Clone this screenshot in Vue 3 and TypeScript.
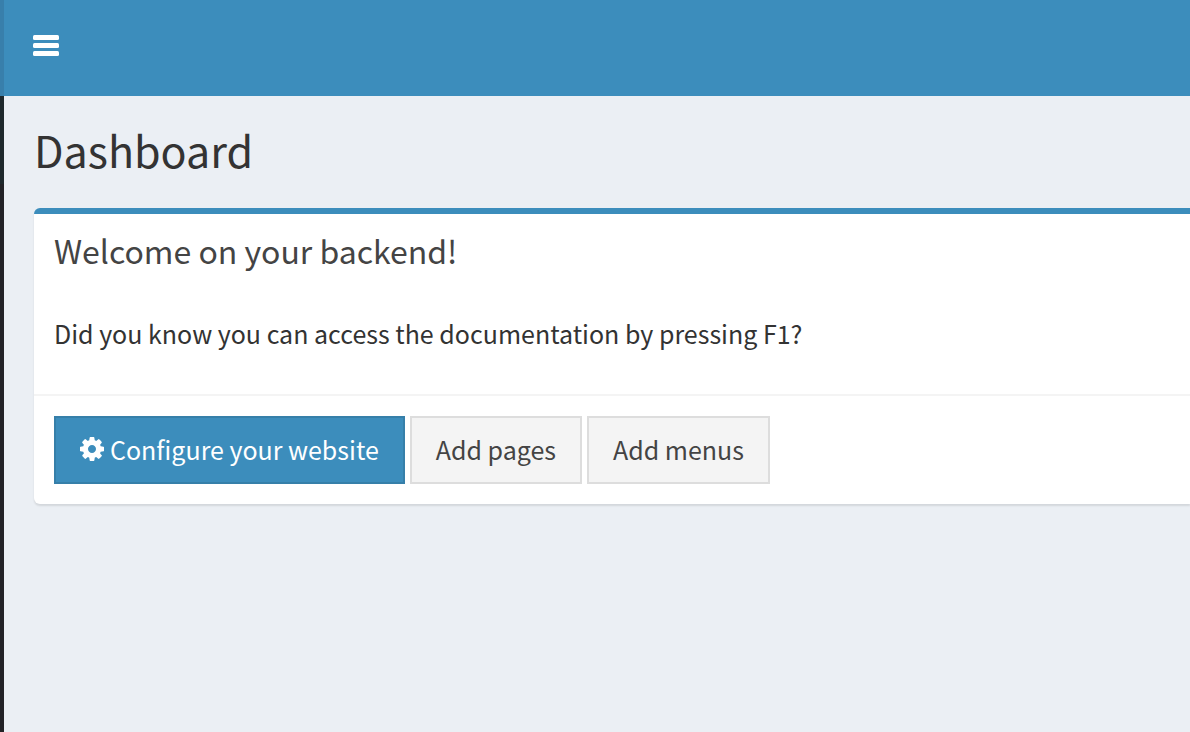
<script setup lang="ts">
import { ref } from 'vue'

interface Shortcut {
  label: string
}

const shortcuts: Shortcut[] = [{ label: 'Add pages' }, { label: 'Add menus' }]
const collapsed = ref<boolean>(true)
</script>

<template>
  <div class="layout">
    <aside class="sidebar">
      <div class="sidebar-brand"></div>
      <div class="sidebar-active"></div>
    </aside>
    <div class="page">
      <header class="navbar">
        <button
          class="toggle"
          type="button"
          aria-label="Toggle navigation"
          :aria-expanded="!collapsed"
          @click="collapsed = !collapsed"
        >
          <svg width="26" height="21" viewBox="0 0 26 21" aria-hidden="true">
            <rect width="26" height="5" rx="1.5" />
            <rect y="8" width="26" height="5" rx="1.5" />
            <rect y="16" width="26" height="5" rx="1.5" />
          </svg>
        </button>
      </header>
      <main class="content">
        <h1>Dashboard</h1>
        <section class="box">
          <div class="box-header">
            <h2>Welcome on your backend!</h2>
          </div>
          <div class="box-body">
            <p>Did you know you can access the documentation by pressing F1?</p>
          </div>
          <div class="box-footer">
            <button class="btn primary" type="button">
              <svg class="cog" width="24" height="24" viewBox="0 0 1536 1536" aria-hidden="true">
                <path
                  d="M1024 768q0-106-75-181t-181-75-181 75-75 181 75 181 181 75 181-75 75-181zm512-109v222q0 12-8 23t-20 13l-185 28q-19 54-39 91 35 50 107 138 10 12 10 25t-9 23q-27 37-99 108t-94 71q-12 0-26-9l-138-108q-44 23-91 38-16 136-29 186-7 28-36 28H657q-14 0-24.500-8.500T621 1506l-28-184q-49-16-90-37l-141 107q-10 9-25 9-14 0-25-11-126-114-165-168-7-10-7-23 0-12 8-23 15-21 51-66.500t54-70.500q-27-50-41-99L29 913q-13-2-21-12.500T0 877V655q0-12 8-23t19-13l186-28q14-46 39-92-40-57-107-138-10-12-10-24 0-10 9-23 26-36 98.500-107.500T337 135q13 0 26 10l138 107q44-23 91-38 16-136 29-186 7-28 36-28h222q14 0 24.500 8.500T915 30l28 184q49 16 90 37l142-107q9-9 24-9 13 0 25 10 129 119 165 170 7 8 7 22 0 12-8 23-15 21-51 66.500t-54 70.500q26 50 41 98l183 28q13 2 21 12.500t8 23.500z"
                />
              </svg>
              <span>Configure your website</span>
            </button>
            <button v-for="item in shortcuts" :key="item.label" class="btn" type="button">
              {{ item.label }}
            </button>
          </div>
        </section>
      </main>
    </div>
  </div>
</template>

<style>
body {
  margin: 0;
  background: #ebeff4;
}
</style>

<style scoped>
.layout {
  display: flex;
  min-height: 100vh;
  overflow: hidden;
  background: #ebeff4;
  color: #333;
  font-family: "Noto Sans CJK SC", "Open Sans", sans-serif;
  font-size: 25px;
  line-height: 40px;
}

.sidebar {
  display: flex;
  flex-direction: column;
  flex: 0 0 4px;
  background: #222226;
}

.sidebar-brand {
  height: 96px;
  background: #387fab;
}

.sidebar-active {
  height: 88px;
  background: #1e282c;
}

.page {
  flex: 1;
  min-width: 0;
}

.navbar {
  display: flex;
  height: 96px;
  background: #3c8dbc;
}

.toggle {
  display: flex;
  align-items: center;
  padding: 0 29px 6px;
  border: 0;
  background: transparent;
  cursor: pointer;
}

.toggle svg {
  fill: #fff;
}

.content {
  padding: 27px 0 30px 30px;
}

h1 {
  margin: 0 0 33px;
  font-size: 43px;
  font-weight: 400;
  line-height: 52px;
}

.box {
  border-top: 6px solid #3c8dbc;
  border-radius: 6px 0 0 6px;
  background: #fff;
  box-shadow: 0 2px 2px rgba(0, 0, 0, 0.1);
}

.box-header {
  padding: 18px 20px 20px;
}

h2 {
  margin: 0;
  color: #444;
  font-size: 32px;
  font-weight: 400;
  line-height: 36px;
}

.box-body {
  padding: 25px 20px 41px;
}

p {
  margin: 0;
}

.box-footer {
  display: flex;
  gap: 5px;
  padding: 20px;
  border-top: 2px solid #f4f4f4;
}

.btn {
  display: flex;
  align-items: center;
  gap: 6px;
  padding: 11px 24px 13px;
  border: 2px solid #ddd;
  background: #f4f4f4;
  color: #444;
  font: inherit;
  white-space: nowrap;
  cursor: pointer;
}

.primary {
  border-color: #367fa9;
  background: #3c8dbc;
  color: #fff;
}

.cog {
  fill: #fff;
}
</style>
